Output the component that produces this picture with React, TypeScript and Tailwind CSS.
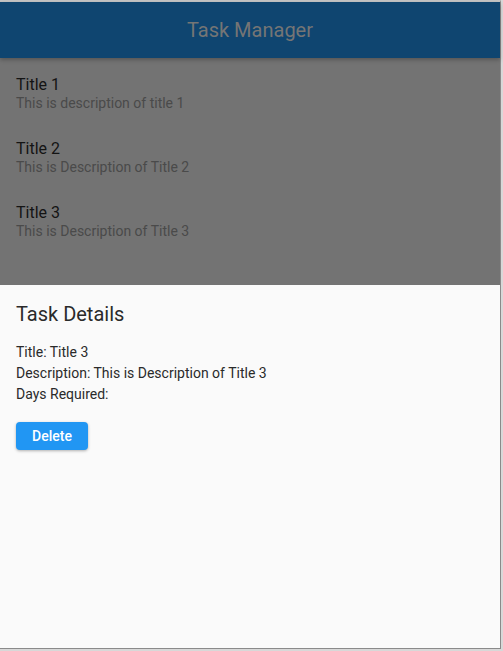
import React from "react";

const items = [
  { t: "Title 1", d: "This is description of title 1" },
  { t: "Title 2", d: "This is Description of Title 2" },
  { t: "Title 3", d: "This is Description of Title 3" },
];

export default function App() {
  return (
    <div
      className="w-[503px] h-[651px] flex bg-[#d8d8d8] overflow-hidden"
      style={{ fontFamily: "Roboto, 'Noto Sans', sans-serif" }}
    >
      <div className="w-[501px] h-[649px] flex flex-col border-t-2 border-t-[#c4c4c4] border-r border-r-[#8a8a8a] border-b border-b-[#8a8a8a] bg-[#fafafa]">
        <div className="h-[56px] shrink-0 bg-[#0f4570] flex items-center justify-center shadow-[0_2px_4px_rgba(0,0,0,0.25)] relative z-10">
          <span className="text-[20px] text-[#757575] font-normal">Task Manager</span>
        </div>
        <div className="h-[227px] shrink-0 bg-[#737373] pt-[8px]">
          {items.map((it) => (
            <div key={it.t} className="h-[64px] px-4 pt-[9px]">
              <div className="text-[16px] leading-[20px] text-[#141414]">{it.t}</div>
              <div className="text-[14px] leading-[17px] text-[#4a4a4a]">{it.d}</div>
            </div>
          ))}
        </div>
        <div className="flex-1 bg-[#fafafa] px-4 pt-[17px]">
          <div className="text-[20px] leading-[24px] text-[#2a2a2a]">Task Details</div>
          <div className="mt-[16px] text-[14px] leading-[21px] text-[#2a2a2a]">
            <div>Title: Title 3</div>
            <div>Description: This is Description of Title 3</div>
            <div>Days Required:</div>
          </div>
          <button className="mt-[17px] w-[72px] h-[28px] rounded-[4px] bg-[#2196f3] text-white text-[14px] font-medium shadow-[0_1px_3px_rgba(0,0,0,0.3)]">
            Delete
          </button>
        </div>
      </div>
    </div>
  );
}
